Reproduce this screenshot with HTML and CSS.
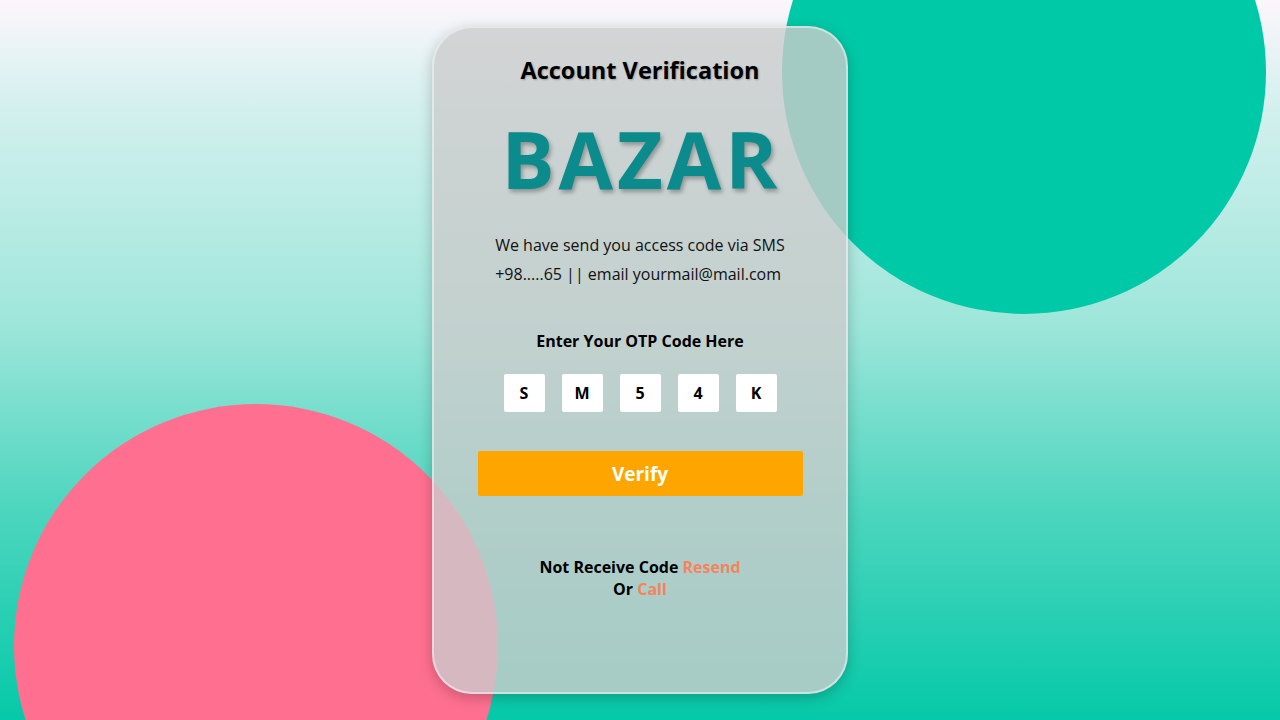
FILE: index.html
```html
<!DOCTYPE html>
<html lang="en">
<head>
<meta charset="utf-8">
<title>Account Verification</title>
<link rel="stylesheet" href="styles.css">
</head>
<body>
  <div class="stage">
    <div class="blob blob-teal"></div>
    <div class="blob blob-pink"></div>
    <main class="card">
      <h1 class="title">Account Verification</h1>
      <div class="brand">BAZAR</div>
      <p class="info">We have send you access code via SMS<br>+98.....65 || email yourmail@mail.com</p>
      <h2 class="otp-label">Enter Your OTP Code Here</h2>
      <div class="otp">
        <div class="otp-box">S</div>
        <div class="otp-box">M</div>
        <div class="otp-box">5</div>
        <div class="otp-box">4</div>
        <div class="otp-box">K</div>
      </div>
      <button class="verify">Verify</button>
      <p class="resend">Not Receive Code <a class="link">Resend</a><br>Or <a class="link">Call</a></p>
    </main>
  </div>
</body>
</html>
```

FILE: styles.css
```css
* { box-sizing: border-box; }
html, body { margin: 0; height: 720px; overflow: hidden; }
body {
  font-family: "Open Sans", "Noto Sans", sans-serif;
}
.stage {
  position: relative;
  height: 720px;
  overflow: hidden;
  display: flex;
  align-items: center;
  justify-content: center;
  background: linear-gradient(180deg, #fcf6fc 0%, #d3f0ee 15%, #9ee6da 45%, #4fd6bf 70%, #05c9a8 100%);
}
.blob {
  position: absolute;
  width: 484px;
  height: 484px;
  border-radius: 50%;
  z-index: 0;
}
.blob-teal { left: 782px; top: -170px; background: #00c9a7; }
.blob-pink { left: 14px; top: 404px; background: #ff7090; }

.card {
  position: relative;
  z-index: 1;
  width: 416px;
  height: 668px;
  border-radius: 40px;
  background: rgba(204, 204, 204, 0.8);
  border: 2px solid rgba(255, 255, 255, 0.45);
  box-shadow: 0 4px 14px rgba(0, 0, 0, 0.22);
  display: flex;
  flex-direction: column;
  align-items: center;
  padding-top: 26px;
}
.title {
  margin: 0;
  font-size: 23.5px;
  font-weight: 700;
  color: #000;
  line-height: 32px;
  text-shadow: 1px 1px 2px rgba(0,0,0,0.25);
}
.brand {
  margin-top: 24px;
  font-size: 79px;
  line-height: 98px;
  font-weight: 700;
  color: #0b8b8b;
  letter-spacing: 4px;
  text-shadow: 2px 3px 4px rgba(0,0,0,0.3);
  padding-left: 3px;
}
.info {
  margin: 23px 0 0;
  font-size: 16px;
  line-height: 29px;
  color: #111;
  text-align: left;
  width: fit-content;
}
.otp-label {
  margin: 41px 0 0;
  font-size: 16px;
  font-weight: 700;
  line-height: 22px;
  color: #000;
}
.otp {
  margin-top: 22px;
  display: flex;
  gap: 17px;
}
.otp-box {
  width: 41px;
  height: 38px;
  background: #fff;
  border-radius: 2px;
  display: flex;
  align-items: center;
  justify-content: center;
  font-weight: 700;
  font-size: 16px;
  color: #000;
}
.verify {
  margin-top: 39px;
  width: 325px;
  height: 45px;
  border: none;
  border-radius: 2px;
  background: #ffa500;
  color: #fff;
  font-family: inherit;
  font-size: 19px;
  font-weight: 700;
}
.resend {
  margin: 60px 0 0;
  font-size: 16px;
  font-weight: 700;
  line-height: 22px;
  text-align: center;
  color: #000;
}
.link { color: #f5845c; }
```
